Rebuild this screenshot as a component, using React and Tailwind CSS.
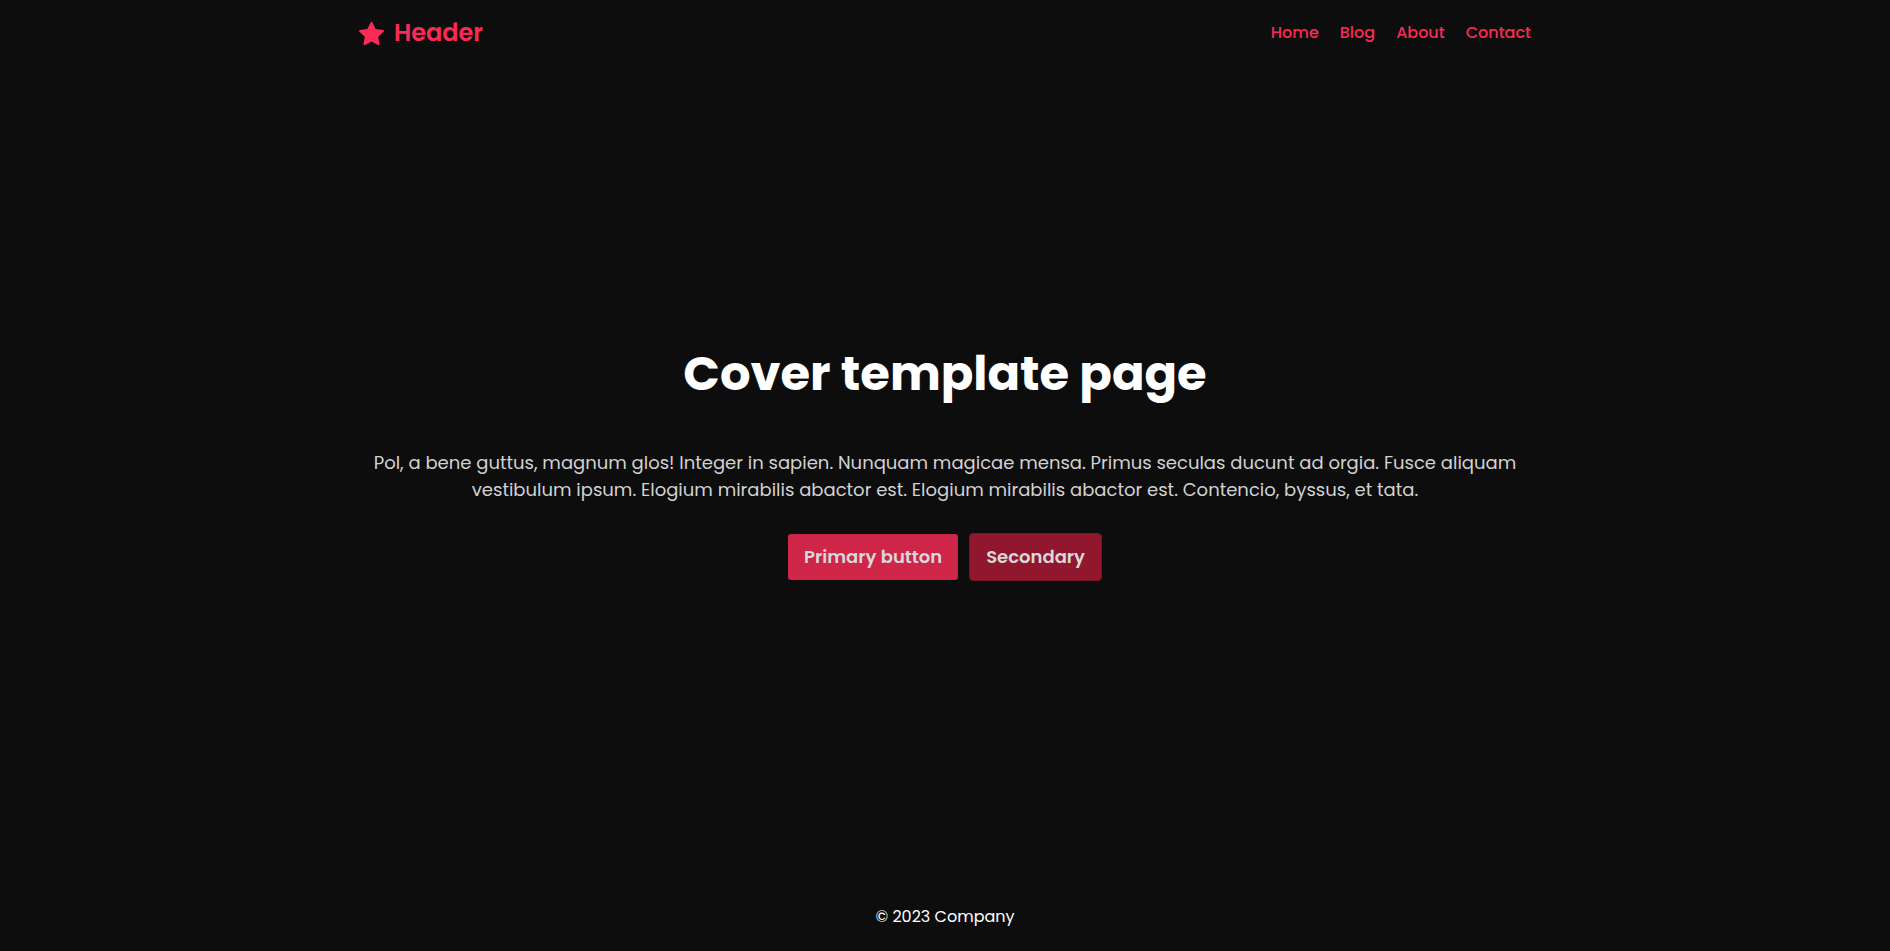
import React from "react";

function StarIcon() {
  return (
    <svg viewBox="0 0 16 16" className="w-[25px] h-[25px]" fill="currentColor">
      <path d="M3.612 15.443c-.386.198-.824-.149-.746-.592l.83-4.73L.173 6.765c-.329-.314-.158-.888.283-.95l4.898-.696L7.538.792c.197-.39.73-.39.927 0l2.184 4.327 4.898.696c.441.062.612.636.282.95l-3.522 3.356.83 4.73c.078.443-.36.79-.746.592L8 13.187l-4.389 2.256z" />
    </svg>
  );
}

function App() {
  const links = ["Home", "Blog", "About", "Contact"];

  return (
    <div
      className="min-h-screen flex flex-col bg-[#0d0d0d] text-white"
      style={{ fontFamily: '"Poppins", "Inter", "Noto Sans", sans-serif' }}
    >
      <header className="w-full max-w-[1172px] mx-auto h-[66px] flex items-center justify-between">
        <a href="#" className="flex items-center gap-[10px] text-[#fb2a56]">
          <StarIcon />
          <span className="text-[24px] font-semibold leading-none">Header</span>
        </a>
        <nav className="flex items-center gap-[21px]">
          {links.map((l) => (
            <a key={l} href="#" className="text-[16px] font-medium text-[#fb2a56]">
              {l}
            </a>
          ))}
        </nav>
      </header>

      <main className="flex-1 flex flex-col items-center justify-center pb-[24px] px-4 text-center">
        <h1 className="text-[48px] font-bold leading-[1.2] mb-[46px]">
          Cover template page
        </h1>
        <p className="max-w-[1170px] text-[18px] leading-[27px] text-[#d2d2d2]">
          Pol, a bene guttus, magnum glos! Integer in sapien. Nunquam magicae mensa. Primus seculas
          ducunt ad orgia. Fusce aliquam vestibulum ipsum. Elogium mirabilis abactor est. Elogium
          mirabilis abactor est. Contencio, byssus, et tata.
        </p>
        <div className="flex items-center gap-[11px] mt-[30px]">
          <button className="h-[46px] px-[16px] rounded-[3px] bg-[#cf2549] text-[18px] font-semibold text-[#d9d9d9]">
            Primary button
          </button>
          <button className="h-[48px] px-[16px] rounded-[4px] bg-[#91172e] border border-[#7a1326] text-[18px] font-semibold text-[#d9d9d9]">
            Secondary
          </button>
        </div>
      </main>

      <footer className="h-[67px] flex items-start justify-center pt-[21px]">
        <span className="text-[16px] leading-[24px] text-white">© 2023 Company</span>
      </footer>
    </div>
  );
}

export default App;
